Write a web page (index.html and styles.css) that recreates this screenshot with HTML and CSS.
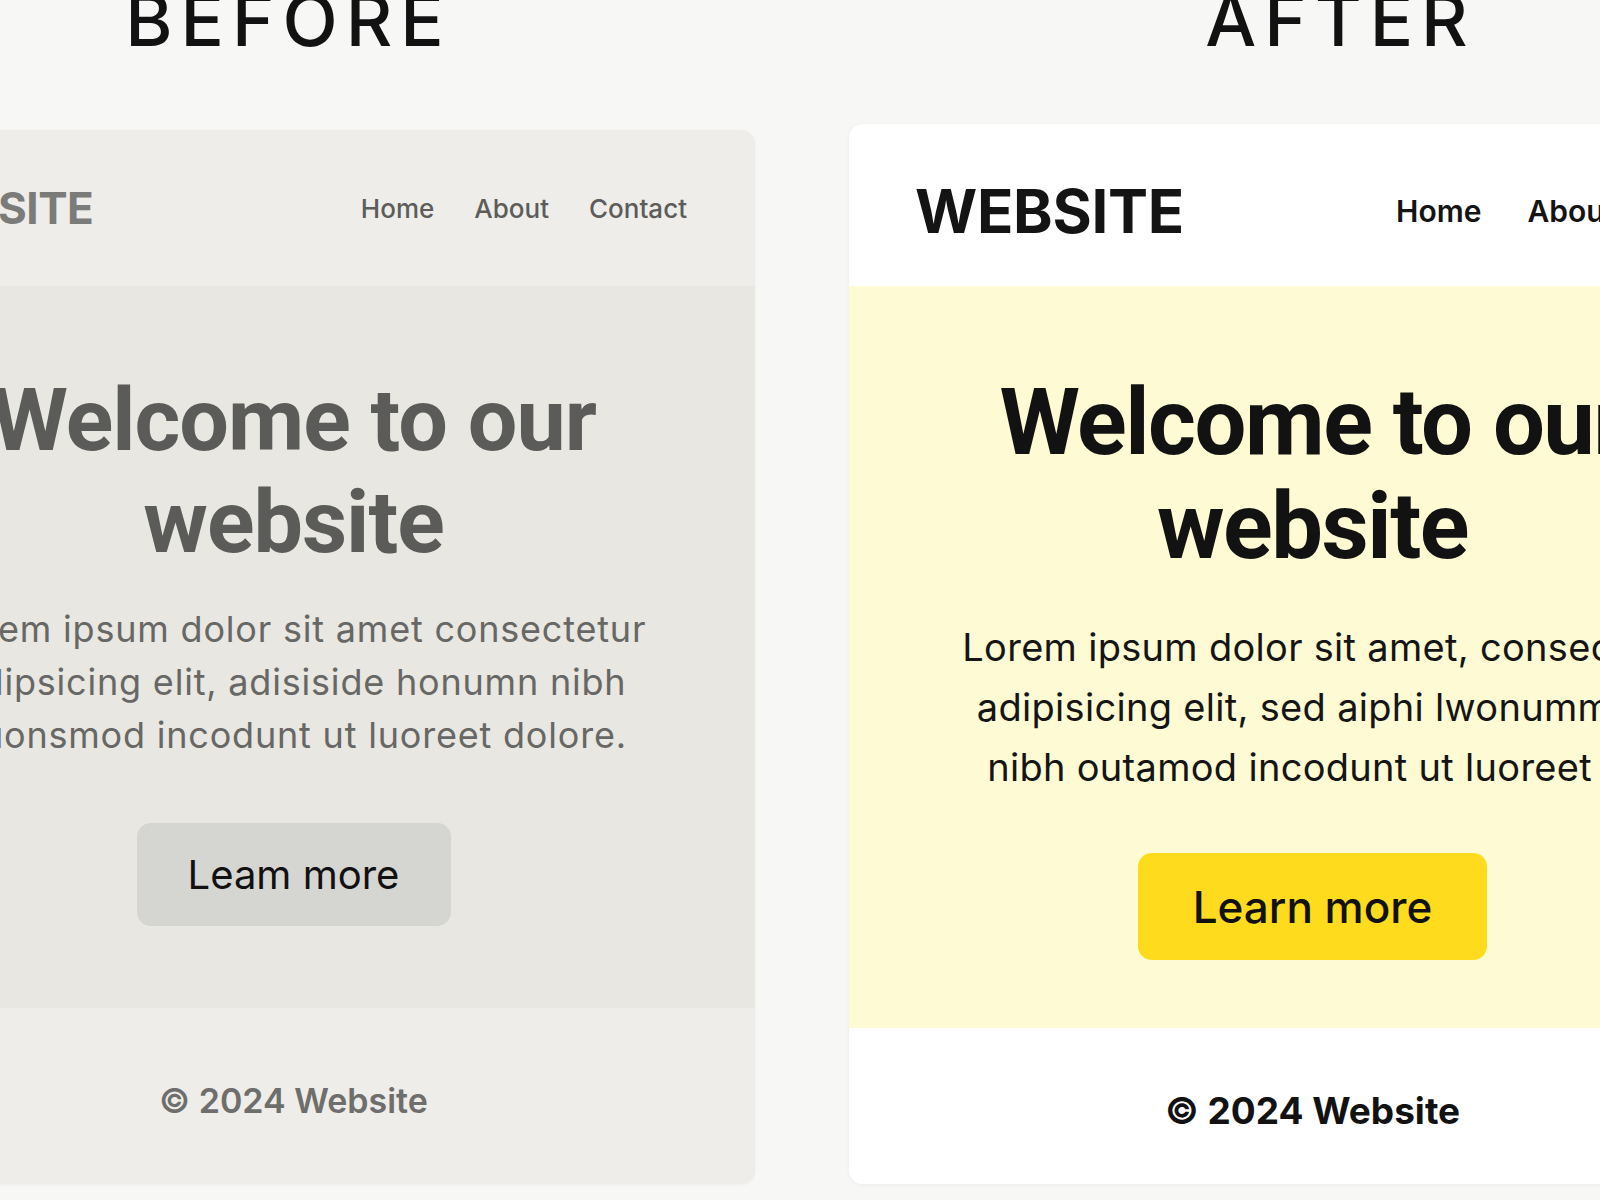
FILE: index.html
```html
<!DOCTYPE html>
<html lang="en">
<head>
<meta charset="utf-8">
<title>Before / After</title>
<link rel="stylesheet" href="styles.css">
</head>
<body>
<div class="stage">
  <section class="column column--before">
    <div class="label">BEFORE</div>
    <div class="card card--before">
      <header class="site-header">
        <div class="logo">WEBSITE</div>
        <nav class="nav">
          <a>Home</a>
          <a>About</a>
          <a>Contact</a>
        </nav>
      </header>
      <main class="hero">
        <h1 class="hero-title">Welcome to our<br>website</h1>
        <p class="hero-text">Lorem ipsum dolor sit amet consectetur<br>adipsicing elit, adisiside honumn nibh<br>euonsmod incodunt ut luoreet dolore.</p>
        <a class="btn">Leam more</a>
      </main>
      <footer class="site-footer">© 2024 Website</footer>
    </div>
  </section>
  <section class="column column--after">
    <div class="label">AFTER</div>
    <div class="card card--after">
      <header class="site-header">
        <div class="logo">WEBSITE</div>
        <nav class="nav">
          <a>Home</a>
          <a>About</a>
          <a>Contact</a>
        </nav>
      </header>
      <main class="hero">
        <h1 class="hero-title">Welcome to our<br>website</h1>
        <p class="hero-text">Lorem ipsum dolor sit amet, consector<br>adipisicing elit, sed aiphi lwonummer<br>nibh outamod incodunt ut luoreet d.</p>
        <a class="btn">Learn more</a>
      </main>
      <footer class="site-footer">© 2024 Website</footer>
    </div>
  </section>
</div>
</body>
</html>
```
FILE: styles.css
```css
* { box-sizing: border-box; }

html, body {
  margin: 0;
  padding: 0;
  width: 1600px;
  height: 1200px;
  overflow: hidden;
  background: #f7f7f6;
  font-family: "Inter", "Liberation Sans", sans-serif;
}

.stage {
  display: flex;
  align-items: flex-start;
  gap: 94px;
  margin-left: -168px;
}

.column {
  display: flex;
  flex-direction: column;
}
.column--before { flex: 0 0 923px; width: 923px; }
.column--after { flex: 0 0 927px; width: 927px; }

.label {
  font-family: "Inter", "Liberation Sans", sans-serif;
  font-weight: 500;
  font-size: 72px;
  line-height: 72px;
  height: 72px;
  letter-spacing: 8px;
  color: #121212;
  margin-top: -16px;
}

.column--before .label { text-align: center; padding-right: 10px; }
.column--after .label { text-align: center; padding-left: 56px; }

.card {
  border-radius: 14px;
  overflow: hidden;
  display: flex;
  flex-direction: column;
}

.column--before .card { margin-top: 74px; height: 1054px; }
.column--after .card { margin-top: 68px; height: 1060px; }

.card--before {
  background: #eeede9;
  box-shadow: 0 1px 3px rgba(0,0,0,0.04);
}
.card--after {
  background: #ffffff;
  box-shadow: 0 1px 4px rgba(0,0,0,0.05);
}

.site-header {
  display: flex;
  align-items: center;
  justify-content: space-between;
  padding: 0 68px 0 66px;
  flex: 0 0 auto;
}

.card--before .site-header { height: 156px; }
.card--after .site-header { height: 162px; padding-top: 12px; }

.logo {
  font-family: "Inter", "Liberation Sans", sans-serif;
  font-weight: 700;
  letter-spacing: -0.5px;
}
.card--before .logo { font-size: 44px; color: #7b7b79; }
.card--after .logo { font-size: 60px; letter-spacing: -0.3px; color: #141414; }

.nav {
  display: flex;
  gap: 40px;
}
.nav a { text-decoration: none; }
.card--before .nav a { font-size: 26px; font-weight: 500; color: #5c5c5a; }
.card--after .nav { gap: 46px; margin-right: -68px; }
.card--after .nav a { font-size: 30px; font-weight: 600; color: #141414; }

.hero {
  flex: 1 1 auto;
  display: flex;
  flex-direction: column;
  align-items: center;
  text-align: center;
}
.card--before .hero { background: #e9e7e1; padding-top: 83px; }
.card--after .hero { background: #fefad3; padding-top: 85px; }

.hero-title {
  margin: 0;
  font-family: "Roboto", "Liberation Sans", sans-serif;
  font-weight: 700;
  white-space: nowrap;
}
.card--before .hero-title {
  font-size: 88px;
  line-height: 102px;
  letter-spacing: -1px;
  color: #5b5b59;
}
.card--after .hero-title {
  font-size: 92px;
  line-height: 104px;
  letter-spacing: -1.5px;
  color: #121212;
}

.hero-text {
  margin: 0;
  white-space: nowrap;
  font-family: "Inter", "Liberation Sans", sans-serif;
}
.card--before .hero-text {
  margin-top: 30px;
  font-size: 36px;
  line-height: 53px;
  letter-spacing: 0.8px;
  color: #676765;
}
.card--after .hero-text {
  margin-top: 38px;
  font-size: 38px;
  line-height: 60px;
  letter-spacing: 0.3px;
  color: #151515;
}

.btn {
  display: flex;
  align-items: center;
  justify-content: center;
  border-radius: 14px;
  text-decoration: none;
  color: #111;
}
.card--before .btn {
  margin-top: 61px;
  width: 314px;
  height: 103px;
  background: #d5d5d2;
  font-size: 40px;
}
.card--after .btn {
  margin-top: 56px;
  width: 349px;
  height: 107px;
  background: #fedb1c;
  font-size: 44px;
  font-weight: 500;
}

.site-footer {
  flex: 0 0 auto;
  display: flex;
  align-items: center;
  justify-content: center;
  font-weight: 600;
}
.card--before .site-footer {
  height: 176px;
  padding-top: 8px;
  background: #eeede9;
  font-size: 34px;
  color: #6e6e6c;
}
.card--after .site-footer {
  height: 156px;
  padding-top: 8px;
  background: #ffffff;
  font-size: 37px;
  font-weight: 700;
  color: #121212;
}
```
